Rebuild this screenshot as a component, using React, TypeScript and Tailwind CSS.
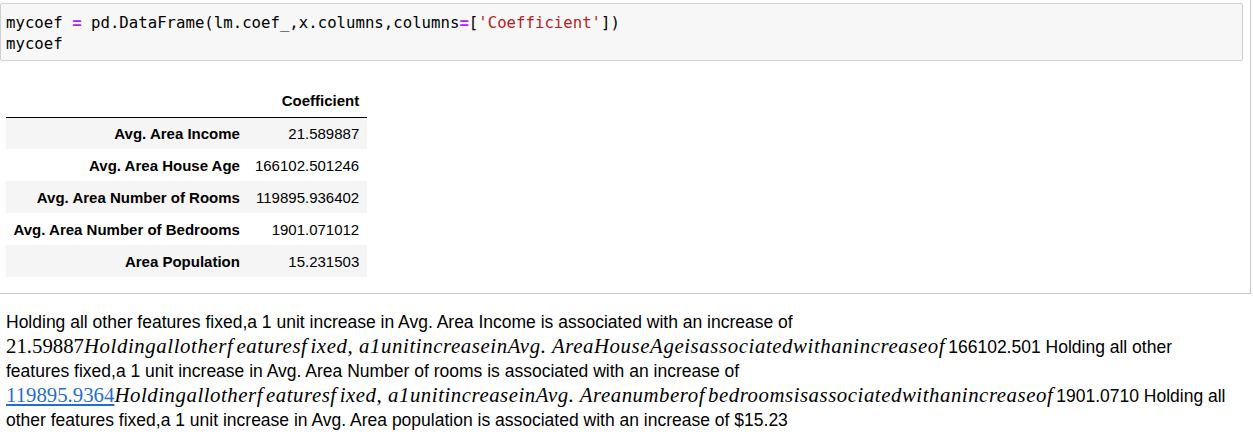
import React from 'react';

const rows = [
  { label: 'Avg. Area Income', value: '21.589887' },
  { label: 'Avg. Area House Age', value: '166102.501246' },
  { label: 'Avg. Area Number of Rooms', value: '119895.936402' },
  { label: 'Avg. Area Number of Bedrooms', value: '1901.071012' },
  { label: 'Area Population', value: '15.231503' },
];

// mathjax 처럼 보이는 이탤릭 구간 (f 뒤에 약간의 간격)
const MathRun: React.FC<{ text: string; className?: string }> = ({ text, className }) => {
  const parts = text.split('f');
  return (
    <span
      className={
        "whitespace-nowrap font-['Liberation_Serif',serif] text-[20.8px] italic leading-none " + (className ?? '')
      }
    >
      {parts.map((p, i) => (
        <React.Fragment key={i}>
          {p}
          {i < parts.length - 1 && <span className="mr-[3px]">f</span>}
        </React.Fragment>
      ))}
    </span>
  );
};

const MathNum: React.FC<{ children: React.ReactNode; link?: boolean }> = ({ children, link }) => (
  <span
    className={
      "font-['Liberation_Serif',serif] text-[20.8px] leading-none " +
      (link ? 'text-[#1f6fd1] underline underline-offset-2' : '')
    }
  >
    {children}
  </span>
);

export default function App() {
  return (
    <div className="min-h-screen w-[1253px] bg-white text-black">
      {/* 코드 셀 + 출력 */}
      <div className="w-[1251px] border-r border-b border-[#c6c6c6] pt-[3px] pb-[16px]">
        <div className="mr-[7px] rounded-[2px] border border-[#cfcfcf] bg-[#f7f7f7] px-[5px] pt-[8px] pb-[6px] font-['DejaVu_Sans_Mono',monospace] text-[15.7px] leading-[21px] whitespace-pre">
          <div>
            mycoef <span className="font-bold text-[#aa22ff]">=</span> pd.DataFrame(lm.coef_,x.columns,columns
            <span className="font-bold text-[#aa22ff]">=</span>[<span className="text-[#ba2121]">'Coefficient'</span>])
          </div>
          <div>mycoef</div>
        </div>

        <table className="mt-[24px] ml-[6px] border-collapse font-['Liberation_Sans',Arial,sans-serif] text-[15px] leading-none">
          <thead>
            <tr className="h-[32px] border-b border-black">
              <th className="px-[7.5px]"></th>
              <th className="px-[7.5px] text-right font-bold">Coefficient</th>
            </tr>
          </thead>
          <tbody>
            {rows.map((r, i) => (
              <tr key={r.label} className={'h-[32px] ' + (i % 2 === 0 ? 'bg-[#f5f5f5]' : '')}>
                <th className="px-[7.5px] text-right font-bold">{r.label}</th>
                <td className="px-[7.5px] text-right">{r.value}</td>
              </tr>
            ))}
          </tbody>
        </table>
      </div>

      {/* 마크다운 셀 */}
      <p className="mt-[16px] ml-[6px] w-[1234px] font-['Liberation_Sans',Arial,sans-serif] text-[17.5px] leading-[24.5px]">
        Holding all other features fixed,a 1 unit increase in Avg. Area Income is associated with an increase of{' '}
        <MathNum>21.59887</MathNum>
        <MathRun
          className="tracking-[0.6px]"
          text="Holdingallotherfeaturesfixed, a1unitincreaseinAvg. AreaHouseAgeisassociatedwithanincreaseof"
        />
        166102.501 Holding all other
        <br />
        features fixed,a 1 unit increase in Avg. Area Number of rooms is associated with an increase of{' '}
        <MathNum link>119895.9364</MathNum>
        <MathRun
          className="tracking-[0.55px]"
          text="Holdingallotherfeaturesfixed, a1unitincreaseinAvg. Areanumberofbedroomsisassociatedwithanincreaseof"
        />
        1901.0710 Holding all
        <br />
        other features fixed,a 1 unit increase in Avg. Area population is associated with an increase of $15.23
      </p>
    </div>
  );
}
